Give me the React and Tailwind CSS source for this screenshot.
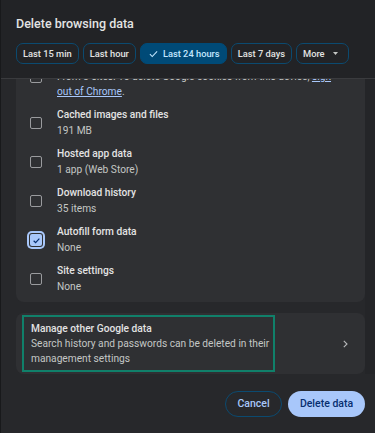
import React from 'react';

const rows = [
  { title: 'Cookies and other site data', lines: ['From 3 sites. To delete Google cookies from this device, sign', 'out of Chrome.'], link: true },
  { title: 'Cached images and files', lines: ['191 MB'] },
  { title: 'Hosted app data', lines: ['1 app (Web Store)'] },
  { title: 'Download history', lines: ['35 items'] },
  { title: 'Autofill form data', lines: ['None'], checked: true },
  { title: 'Site settings', lines: ['None'] }
];

const chips = ['Last 15 min', 'Last hour', 'Last 24 hours', 'Last 7 days'];

function Checkbox({ checked }) {
  if (checked) {
    return (
      <span className="mt-[1px] flex h-[12px] w-[12px] items-center justify-center rounded-[2px] bg-[#a8c7fa] ring-2 ring-[#a8c7fa] ring-offset-1 ring-offset-[#2f3033]">
        <svg width="9" height="9" viewBox="0 0 12 12" fill="none">
          <path d="M2.2 6.3 4.8 8.8 9.8 3.4" stroke="#062e6f" strokeWidth="1.6" />
        </svg>
      </span>
    );
  }
  return <span className="mt-[1px] block h-[12px] w-[12px] rounded-[2px] border-[1.5px] border-[#9a9b9e]" />;
}

function Row({ row }) {
  return (
    <div className="flex items-center py-[4px] pl-[14px]">
      <div className="flex w-[27px] shrink-0">
        <Checkbox checked={row.checked} />
      </div>
      <div className="whitespace-nowrap">
        <div className="text-[10.2px] leading-[16px] font-medium text-[#e3e3e3]">{row.title}</div>
        {row.lines.map((line, i) =>
          row.link ? (
            <div key={i} className="text-[10.2px] leading-[15px] text-[#c4c7c5]">
              {i === 0 ? (
                <>
                  From 3 sites. To delete Google cookies from this device, <span className="text-[#a8c7fa] underline">sign</span>
                </>
              ) : (
                <>
                  <span className="text-[#a8c7fa] underline">out of Chrome</span>.
                </>
              )}
            </div>
          ) : (
            <div key={i} className="text-[10.2px] leading-[15px] text-[#c4c7c5]">
              {line}
            </div>
          )
        )}
      </div>
    </div>
  );
}

export default function App() {
  return (
    <div
      className="flex h-[433px] w-[375px] flex-col overflow-hidden border-l border-[#18191b] bg-[#27282b]"
      style={{ fontFamily: 'Roboto, "Noto Sans", sans-serif' }}
    >
      <div className="h-[79px] shrink-0 border-b border-[#3a3b3e] bg-[#222326] px-[15px] pt-[14px]">
        <h1 className="text-[12.5px] leading-[20px] font-medium text-[#e3e3e3]">Delete browsing data</h1>
        <div className="mt-[9px] flex gap-[4px] whitespace-nowrap">
          {chips.map((chip) =>
            chip === 'Last 24 hours' ? (
              <span
                key={chip}
                className="flex h-[21px] items-center gap-[5px] rounded-[7px] border border-[#004a77] bg-[#004a77] pr-[6px] pl-[8px] text-[9.3px] font-medium text-[#c2e7ff]"
              >
                <svg width="9" height="8" viewBox="0 0 10 8" fill="none">
                  <path d="M1 4.2 3.6 6.8 9 1.2" stroke="#c2e7ff" strokeWidth="1.2" />
                </svg>
                {chip}
              </span>
            ) : (
              <span
                key={chip}
                className="flex h-[21px] items-center rounded-[7px] border border-[#0b4a70] px-[6px] text-[9.3px] font-medium text-[#e3e3e3]"
              >
                {chip}
              </span>
            )
          )}
          <span className="flex h-[21px] items-center gap-[8px] rounded-[7px] border border-[#0b4a70] pr-[10px] pl-[6px] text-[9.3px] font-medium text-[#e3e3e3]">
            More
            <svg width="5" height="3" viewBox="0 0 5 3">
              <path d="M0 0h5L2.5 3z" fill="#c4c7c5" />
            </svg>
          </span>
        </div>
      </div>

      <div className="flex overflow-hidden">
        <div className="min-w-0 flex-1 pl-[15px]">
          <div className="-mt-[38px] overflow-hidden rounded-[8px] bg-[#2f3033] pt-[8px] pb-[4px]">
            {rows.map((row) => (
              <Row key={row.title} row={row} />
            ))}
          </div>
          <div className="mt-[11px] flex h-[61px] items-start rounded-[8px] bg-[#2f3033]">
            <div className="mt-[2px] ml-[6px] h-[57px] w-[253px] border-2 border-[#10806a] px-[7px] pt-[4px] whitespace-nowrap">
              <div className="text-[10.2px] leading-[15px] font-medium text-[#e3e3e3]">Manage other Google data</div>
              <div className="text-[10.2px] leading-[15px] text-[#c4c7c5]">
                Search history and passwords can be deleted in their
              </div>
              <div className="text-[10.2px] leading-[15px] text-[#c4c7c5]">management settings</div>
            </div>
            <div className="flex flex-1 justify-end self-center pr-[17px]">
              <svg width="5" height="8" viewBox="0 0 5 8" fill="none">
                <path d="M0.8 0.8 4 4 0.8 7.2" stroke="#b8babc" strokeWidth="1.1" />
              </svg>
            </div>
          </div>
        </div>
        <div className="w-[10px] shrink-0 bg-[#242528]" />
      </div>

      <div className="flex justify-end gap-[6px] pt-[17px] pr-[10px]">
        <button className="h-[26px] w-[57px] rounded-full border border-[#0b4a70] text-[10.5px] font-medium text-[#a8c7fa]">
          Cancel
        </button>
        <button className="h-[26px] w-[77px] rounded-full bg-[#a8c7fa] text-[10.5px] font-medium text-[#062e6f]">
          Delete data
        </button>
      </div>
    </div>
  );
}
